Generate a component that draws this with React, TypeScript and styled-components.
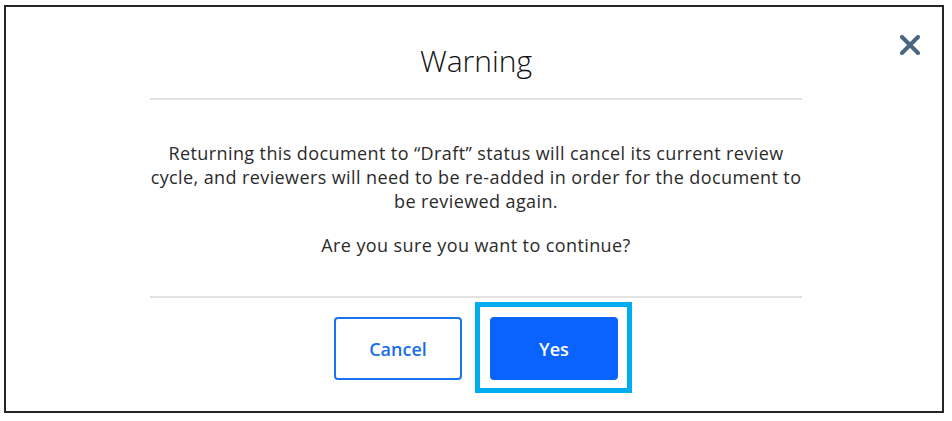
import React from "react";
import styled, { createGlobalStyle } from "styled-components";

const GlobalStyle = createGlobalStyle`
  html, body {
    margin: 0;
    padding: 0;
    background: #ffffff;
  }
  body {
    font-family: "Open Sans", "Noto Sans", Arial, sans-serif;
  }
`;

const Frame = styled.div`
  position: relative;
  box-sizing: border-box;
  margin: 5px 8px 0 4px;
  height: 408px;
  border: 2px solid #262626;
  padding: 36px 140px 0 144px;
  background: #ffffff;
`;

const CloseButton = styled.button`
  position: absolute;
  top: 24px;
  right: 18px;
  width: 28px;
  height: 28px;
  padding: 0;
  border: none;
  background: transparent;
  display: flex;
  align-items: center;
  justify-content: center;
  cursor: pointer;
`;

const Title = styled.h2`
  margin: 0;
  font-size: 30px;
  line-height: 36px;
  font-weight: 300;
  color: #111111;
  text-align: center;
`;

const Divider = styled.hr<{ $top: number }>`
  margin: ${(p) => p.$top}px 0 0;
  border: none;
  border-top: 2px solid #e2e2e2;
  height: 0;
`;

const Body = styled.div`
  margin: 41px -8px 0;
  text-align: center;
  color: #2b2b2b;
  font-size: 18px;
  line-height: 24px;
  letter-spacing: 0.4px;
`;

const Paragraph = styled.p`
  margin: 0 0 20px;

  &:last-child {
    margin-bottom: 0;
  }
`;

const Actions = styled.div`
  display: flex;
  justify-content: center;
  gap: 28px;
  margin-top: 19px;
`;

const ActionButton = styled.button<{ $primary?: boolean }>`
  position: relative;
  box-sizing: border-box;
  width: 128px;
  height: 63px;
  border-radius: 4px;
  font-family: inherit;
  font-size: 18px;
  font-weight: 600;
  cursor: pointer;
  border: 2px solid;
  background: ${(p) => (p.$primary ? "#0a63ff" : "#ffffff")};
  border-color: ${(p) => (p.$primary ? "#0a63ff" : "#1a73f0")};
  color: ${(p) => (p.$primary ? "#ffffff" : "#1a6fe8")};
  outline: none;
`;

const FocusRing = styled.span`
  position: absolute;
  top: -17px;
  left: -17px;
  right: -16px;
  bottom: -15px;
  border: 5px solid #00aeef;
  pointer-events: none;
`;

const App: React.FC = () => (
  <>
    <GlobalStyle />
    <Frame>
      <CloseButton aria-label="Close">
        <svg width="22" height="20" viewBox="0 0 22 20">
          <path
            d="M3 2 L19 18 M19 2 L3 18"
            stroke="#4a6782"
            strokeWidth="4"
            strokeLinecap="round"
          />
        </svg>
      </CloseButton>
      <Title>Warning</Title>
      <Divider $top={19} />
      <Body>
        <Paragraph>
          Returning this document to “Draft” status will cancel its current review
          cycle, and reviewers will need to be re-added in order for the document to
          be reviewed again.
        </Paragraph>
        <Paragraph>Are you sure you want to continue?</Paragraph>
      </Body>
      <Divider $top={39} />
      <Actions>
        <ActionButton>Cancel</ActionButton>
        <ActionButton $primary>
          Yes
          <FocusRing />
        </ActionButton>
      </Actions>
    </Frame>
  </>
);

export default App;
